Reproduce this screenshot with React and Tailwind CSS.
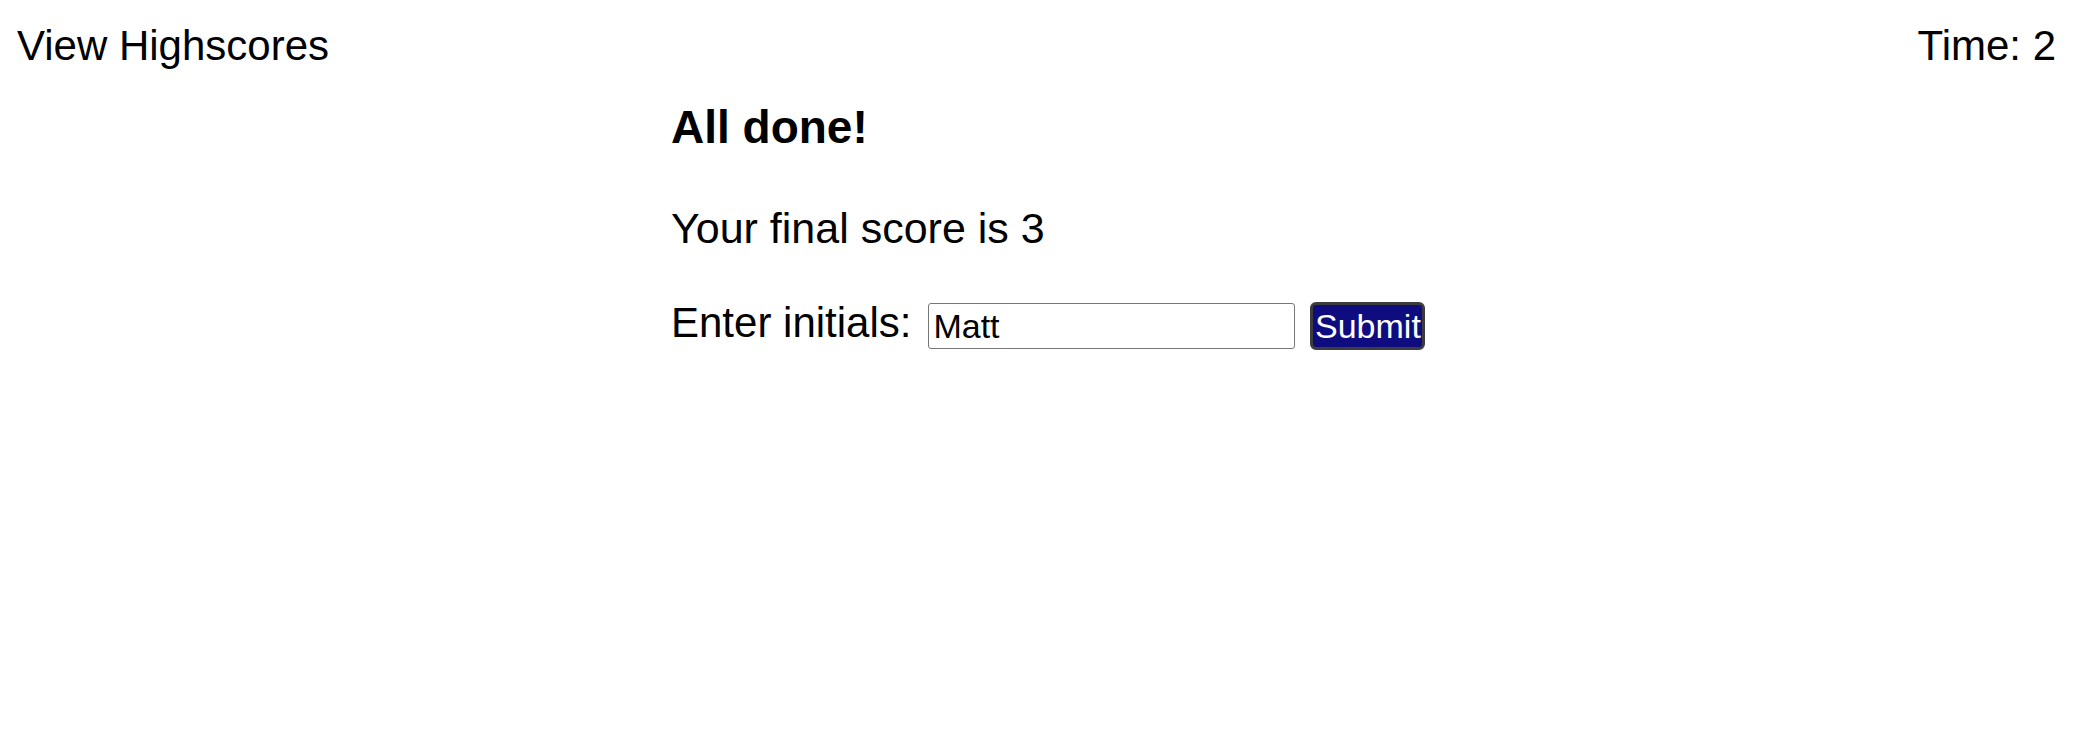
import { useState } from 'react';

export default function App() {
  const [initials, setInitials] = useState('Matt');

  return (
    <div className="min-h-[748px] bg-white text-black font-['Liberation_Sans',Arial,sans-serif]">
      <header className="flex justify-between pl-[17px] pr-[40px] pt-[22px] text-[42px] leading-[48px]">
        <a href="#" className="text-black">View Highscores</a>
        <span>Time: 2</span>
      </header>

      <main className="mx-auto w-[754px]">
        <h2 className="mt-[31px] text-[46px] leading-[52px] font-bold">All done!</h2>
        <p className="mt-[51px] text-[43px] leading-[48px]">Your final score is 3</p>
        <form className="mt-[47px] flex items-start" onSubmit={(e) => e.preventDefault()}>
          <label htmlFor="initials" className="shrink-0 whitespace-nowrap text-[42px] leading-[48px]">
            Enter initials:
          </label>
          <input
            id="initials"
            value={initials}
            onChange={(e) => setInitials(e.target.value)}
            className="ml-[17px] mt-[4px] h-[46px] w-[367px] shrink-0 rounded-[3px] border border-[#767676] px-[4px] text-[34px] leading-[44px] text-black outline-none"
          />
          <button
            type="submit"
            className="ml-[15px] mt-[3px] h-[48px] w-[115px] shrink-0 rounded-[6px] border-[3px] border-[#3c3c3c] bg-[#0f0c80] text-[34px] leading-[40px] text-white"
          >
            Submit
          </button>
        </form>
      </main>
    </div>
  );
}
